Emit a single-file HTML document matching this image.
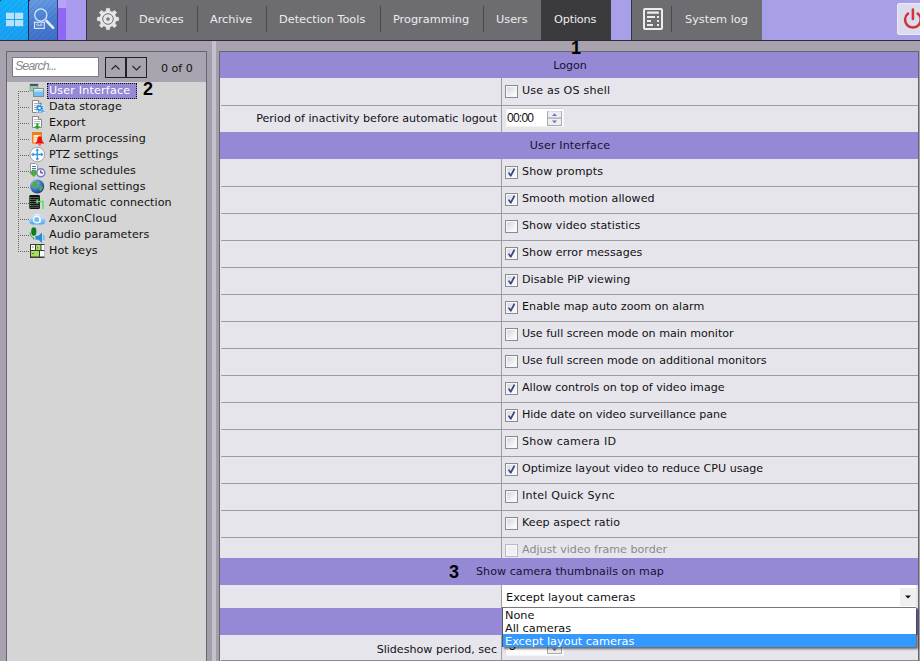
<!DOCTYPE html>
<html><head><meta charset="utf-8"><title>Options</title>
<style>
*{box-sizing:border-box;margin:0;padding:0}
html,body{width:920px;height:661px;overflow:hidden}
body{background:#a7a2ae;font-family:"DejaVu Sans","Liberation Sans",sans-serif;font-size:11px;color:#111;position:relative}
.abs{position:absolute}
svg{display:block}
#topbar{left:0;top:0;width:920px;height:41px;background:#a79fe7;border-bottom:1px solid #2b2b3b}
#tab1{left:0;top:0;width:28px;height:40px;background:repeating-linear-gradient(135deg,rgba(0,40,120,0) 0 3.2px,rgba(0,40,120,.13) 3.2px 4.24px),linear-gradient(170deg,#14b2fb,#1c9ff0)}
#tab2{left:29px;top:0;width:28px;height:40px;background:repeating-linear-gradient(135deg,rgba(0,20,100,0) 0 3.2px,rgba(0,20,100,.12) 3.2px 4.24px),linear-gradient(165deg,#6a9fe6,#4a80d2 50%,#3d6fc8)}
#tabsep{left:28px;top:0;width:1px;height:40px;background:#1d2a55}
#tabsep2{left:57px;top:0;width:1px;height:40px;background:#3a3f80}
#stripe1{left:58px;top:0;width:8px;height:40px;background:linear-gradient(#b8a2fc 0 8.5px,#9066f6 8.5px)}
#stripe2{left:66px;top:0;width:20px;height:40px;background:#a99cee}
.tb{top:0;height:40px;background:#6d6d71;border-left:1px solid #33334a}
.tsep{top:6px;width:1px;height:26px;background:#4a4a4c}
.tl{top:0;height:40px;line-height:40px;color:#ececec;font-size:11.3px;white-space:nowrap}
#opt{left:541px;top:0;width:70px;height:40px;background:#3b3b3d}
#power{left:897px;top:3px;width:26px;height:32px;background:#dddcee;border:1px solid #eceaf6;border-radius:2px}
.num{z-index:5;font-family:"Liberation Sans",sans-serif;font-weight:bold;font-size:18px;line-height:20px;color:#000}
/* left panel */
#lp{left:6px;top:51px;width:201px;height:620px;border:1px solid #68666c;background:#a9a4b0}
#tree{left:7px;top:82px;width:199px;height:580px;background:#d5d5d5}
#search{left:12px;top:57px;width:87px;height:20px;background:#fff;border:1px solid #7c7a82;color:#8a8a8a;font-family:"Liberation Sans",sans-serif;font-style:italic;font-size:12.5px;line-height:17px;padding-left:2px;letter-spacing:-1px}
.sbtn{top:57px;width:21px;height:21px;border:1px solid #222}
#cnt{left:161px;top:61px;font-size:11.1px;line-height:16px;color:#111}
#tvl{left:18px;top:91px;width:1px;height:161px;background:repeating-linear-gradient(#666 0 1px,transparent 1px 2px)}
.thl{left:18px;width:11px;height:1px;background:repeating-linear-gradient(90deg,#666 0 1px,transparent 1px 2px)}
.ico{left:29px;width:16px;height:16px}
#sel{left:47px;top:83px;width:90px;height:16px;background:#9589d6;border:1px dotted #111}
.ti{left:49px;height:16px;line-height:17px;font-size:11.1px;white-space:nowrap;color:#111}
#splitter{left:212px;top:41px;width:4px;height:631px;background:#c4c1cb}
.strip{top:52px;height:620px;background:#a39eab}
/* right panel */
#rp{left:219px;top:51px;width:700px;height:620px;border:1px solid #68666c;background:#e7e5ec;overflow:hidden}
.hd{left:220px;width:698px;height:27px;background:#9589d6;text-align:center;padding-left:2px;line-height:27px;font-size:11.1px;color:#16122e}
.rl{left:221px;width:697px;height:1px;background:#9d9c9f}
#vline{left:501px;top:78px;width:1px;height:583px;background:#9d9c9f}
.cb{left:505px;width:13px;height:13px;border:1px solid #8a8b8f;background:linear-gradient(135deg,#cdd0d4,#f6f6f8 70%,#fdfdfd);box-shadow:inset 0 0 0 1.3px #f7f7f9}
.cb.dis{border-color:#bcbcc0;background:#f0f0f2}
.ct{left:522px;height:16px;line-height:16px;font-size:11.1px;white-space:nowrap;color:#111}
.ct.dis{color:#8a8a8e}
.lbl{left:220px;width:277px;text-align:right;height:16px;line-height:16px;font-size:11.1px;white-space:nowrap;color:#111}
#time{left:506px;top:108px;width:58px;height:19px;background:#fff;border:1px solid #f4f4f8;border-top-color:#d0d0d6;font-family:"Liberation Sans",sans-serif;font-size:12px;line-height:18px;padding-left:0;color:#111;letter-spacing:-0.75px}
#spin{left:547px;top:111px;width:15px;height:15px}
#combo{left:502px;top:585px;width:414px;height:23px;background:#fff;font-size:11.3px;line-height:25px;padding-left:4px;color:#111;white-space:nowrap}
#cbtn{left:900px;top:588px;width:16px;height:18px;background:#f0f0f0}
#dd{left:502px;top:607px;width:414px;height:40px;background:#fff;border-left:1px solid #555;border-top:1px solid #777;box-shadow:2px 2px 2px rgba(0,0,0,.55)}
.di{height:13px;line-height:13px;font-size:11.3px;padding-left:2px;color:#111;white-space:nowrap}
.di span{display:inline-block;position:relative;top:1px;transform:scaleY(.9);transform-origin:0 80%}
.di.selx{background:#3399ff;color:#fff}
#time2{left:506px;top:637px;width:58px;height:19px;background:#fff;border:1px solid #f4f4f8;font-family:"Liberation Sans",sans-serif;font-size:12px;line-height:17px;padding-left:2px;color:#111}
#spin2{left:547px;top:639px;width:15px;height:15px}
</style></head><body>
<div id="topbar" class="abs"></div>
<div id="tab1" class="abs"></div><div id="tabsep" class="abs"></div>
<div id="tab2" class="abs"></div><div id="tabsep2" class="abs"></div>
<div id="stripe1" class="abs"></div><div id="stripe2" class="abs"></div>
<div class="abs tb" style="left:86px;width:455px"></div>
<div id="opt" class="abs"></div>
<div class="abs tb" style="left:631px;width:131px"></div>
<div class="abs tsep" style="left:126px"></div>
<div class="abs tsep" style="left:197px"></div>
<div class="abs tsep" style="left:266px"></div>
<div class="abs tsep" style="left:380px"></div>
<div class="abs tsep" style="left:483px"></div>
<div class="abs tsep" style="left:671px"></div>
<div class="abs tl" style="left:139px">Devices</div>
<div class="abs tl" style="left:210px">Archive</div>
<div class="abs tl" style="left:279px">Detection Tools</div>
<div class="abs tl" style="left:393px">Programming</div>
<div class="abs tl" style="left:496px">Users</div>
<div class="abs tl" style="left:554px;letter-spacing:-.2px">Options</div>
<div class="abs tl" style="left:685px">System log</div>

<svg class="abs" style="left:0;top:0" width="60" height="40" viewBox="0 0 60 40">
<path d="M0 0 H2 Q0 0 0 2 Z M29 0 H31 Q29 0 29 2 Z" fill="#111"/>
<g fill="#b6e2fd"><rect x="6" y="12.7" width="8" height="6.3"/><rect x="15" y="12.7" width="8.2" height="6.3"/><rect x="6" y="20" width="8" height="6.2"/><rect x="15" y="20" width="8.2" height="6.2"/></g>
<circle cx="40.8" cy="15" r="6.1" fill="none" stroke="#dde6f8" stroke-width="1.25"/>
<path d="M46.5 21 L53.2 27.8" stroke="#e3ebfb" stroke-width="2.6" stroke-linecap="round"/>
<rect x="34.5" y="22.2" width="9.8" height="6.2" fill="#4b7fd0" stroke="#e3ebfb" stroke-width="1.1"/>
<circle cx="37.5" cy="24.6" r="0.9" fill="none" stroke="#e3ebfb" stroke-width="0.7"/><circle cx="41.3" cy="24.6" r="0.9" fill="none" stroke="#e3ebfb" stroke-width="0.7"/><path d="M37.5 25.6 H41.3" stroke="#e3ebfb" stroke-width="0.6"/>
</svg>
<svg class="abs" style="left:87px;top:0" width="40" height="40" viewBox="0 0 40 40">
<path d="M19.07 11.24 L19.53 8.40 L22.47 8.40 L22.93 11.24 L25.13 12.15 L27.46 10.47 L29.53 12.54 L27.85 14.87 L28.76 17.07 L31.60 17.53 L31.60 20.47 L28.76 20.93 L27.85 23.13 L29.53 25.46 L27.46 27.53 L25.13 25.85 L22.93 26.76 L22.47 29.60 L19.53 29.60 L19.07 26.76 L16.87 25.85 L14.54 27.53 L12.47 25.46 L14.15 23.13 L13.24 20.93 L10.40 20.47 L10.40 17.53 L13.24 17.07 L14.15 14.87 L12.47 12.54 L14.54 10.47 L16.87 12.15 Z" fill="#e7e7e7" stroke="#e7e7e7" stroke-width="0.7" stroke-linejoin="round"/>
<circle cx="21" cy="19" r="5.3" fill="none" stroke="#6e6e72" stroke-width="1"/><circle cx="21" cy="19" r="1.8" fill="#77777b"/>
</svg>
<svg class="abs" style="left:640px;top:0" width="30" height="40" viewBox="0 0 30 40">
<rect x="4" y="9" width="18" height="20" rx="1" fill="none" stroke="#ececec" stroke-width="2"/>
<g fill="#ececec"><rect x="7" y="11.6" width="12" height="2.1" rx=".6"/><rect x="7" y="16" width="8" height="2"/><rect x="17" y="16" width="2" height="2"/><rect x="7" y="20" width="4" height="2"/><rect x="17" y="20" width="2" height="2"/><rect x="7" y="24" width="6" height="2"/><rect x="17" y="24" width="2" height="2"/></g>
</svg>
<div id="power" class="abs"><svg width="24" height="30" viewBox="0 0 24 30"><path d="M10.1 9.6 A7.8 7.8 0 1 0 19.7 9.6" fill="none" stroke="#cf3535" stroke-width="2.5" stroke-linecap="round"/><path d="M14.9 5.6 V15" stroke="#cf3535" stroke-width="2.5" stroke-linecap="round"/></svg></div>
<div class="abs num" style="left:571px;top:38px">1</div>

<div id="lp" class="abs"></div>
<div id="tree" class="abs"></div>
<div id="search" class="abs">Search...</div>
<div class="abs sbtn" style="left:105px"><svg width="19" height="19" viewBox="0 0 19 19"><path d="M5.5 11.5 L9.5 7.5 L13.5 11.5" fill="none" stroke="#222" stroke-width="1.1"/></svg></div>
<div class="abs sbtn" style="left:126px"><svg width="19" height="19" viewBox="0 0 19 19"><path d="M5.5 8 L9.5 12 L13.5 8" fill="none" stroke="#222" stroke-width="1.1"/></svg></div>
<div class="abs" id="cnt">0 of 0</div>
<div class="abs" id="tvl"></div>
<div class="abs thl" style="top:91px"></div>
<div class="abs ico" style="top:82px"><svg width="16" height="16" viewBox="0 0 16 16"><rect x="1" y="2" width="8" height="7" fill="#8fd095" stroke="#8d8d9a" stroke-width="0.6"/><rect x="1" y="2" width="8" height="2" fill="#4c4c86"/><rect x="4.5" y="6.5" width="10" height="8" fill="#6cc4f6" stroke="#8a8a8e"/><rect x="5" y="7" width="9" height="1.5" fill="#e8f4fc"/><rect x="5" y="9" width="9" height="1" fill="#a8dcfa"/></svg></div>
<div class="abs" id="sel"></div>
<div class="abs ti" style="top:82px;color:#fff;letter-spacing:.2px">User Interface</div>
<div class="abs thl" style="top:107px"></div>
<div class="abs ico" style="top:98px"><svg width="16" height="16" viewBox="0 0 16 16" style="overflow:visible"><path d="M3.5 2.5 H9.5 L12.5 5.5 V14.5 H3.5 Z" fill="#fff" stroke="#888" /><path d="M9.5 2.5 V5.5 H12.5" fill="#ddd" stroke="#888"/><path d="M5 5.5 H9 M5 7.5 H8 M5 9.5 H7 M5 11.5 H7" stroke="#aaa" stroke-width="1"/><rect x="7" y="6.5" width="8" height="8" fill="#cfe8fb" opacity=".8"/><circle cx="10.5" cy="10" r="3.1" fill="none" stroke="#2583dd" stroke-width="1.2" stroke-dasharray="1.2 1.23"/><circle cx="10.5" cy="10" r="2" fill="#e8f4ff" stroke="#2583dd" stroke-width="1.3"/><path d="M12.5 12 L15 14.5" stroke="#58a8ee" stroke-width="2.4" stroke-linecap="round"/><circle cx="15" cy="14.7" r="1" fill="#e8f4ff"/></svg></div>
<div class="abs ti" style="top:98px;letter-spacing:.05px">Data storage</div>
<div class="abs thl" style="top:123px"></div>
<div class="abs ico" style="top:114px"><svg width="16" height="16" viewBox="0 0 16 16" style="overflow:visible"><path d="M3.5 2.5 H9.5 L12.5 5.5 V13.5 H3.5 Z" fill="#fff" stroke="#888" /><path d="M9.5 2.5 V5.5 H12.5" fill="#ddd" stroke="#888"/><path d="M5 5.5 H9 M5 7.5 H11 M5 9.5 H11" stroke="#bbb" stroke-width="1"/><path d="M7.2 9.6 H9.4 V12.2 H11.4 L8.3 15.6 L5.2 12.2 H7.2 Z" fill="#1fae22"/></svg></div>
<div class="abs ti" style="top:114px;letter-spacing:.05px">Export</div>
<div class="abs thl" style="top:139px"></div>
<div class="abs ico" style="top:130px"><svg width="16" height="16" viewBox="0 0 16 16" style="overflow:visible"><rect x="3" y="2" width="10" height="11.5" fill="#f07c1c"/><rect x="4.5" y="5" width="7" height="7.5" fill="#fdeccf"/><path d="M4.5 7.5 H11.5 M4.5 10 H11.5" stroke="#f4b878" stroke-width="0.8"/><path d="M10.7 6.3 C12.6 6.3 13 8 13.1 9.8 C13.2 11.4 14 12.2 15 12.8 V13.6 H6.4 V12.8 C7.4 12.2 8.2 11.4 8.3 9.8 C8.4 8 8.8 6.3 10.7 6.3 Z" fill="#ee1111"/><rect x="9.5" y="14.4" width="2.4" height="1" fill="#ee1111"/></svg></div>
<div class="abs ti" style="top:130px;letter-spacing:.05px">Alarm processing</div>
<div class="abs thl" style="top:155px"></div>
<div class="abs ico" style="top:146px"><svg width="16" height="16" viewBox="0 0 16 16" style="overflow:visible"><circle cx="8.3" cy="8.5" r="7.3" fill="#fff" stroke="#999" stroke-width="0.9"/><path d="M8.3 3.5 V13.5 M3.3 8.5 H13.3" stroke="#3896e0" stroke-width="1.3"/><path d="M8.3 2.2 L10.3 4.8 H6.3 Z M8.3 14.8 L10.3 12.2 H6.3 Z M2 8.5 L4.6 6.5 V10.5 Z M14.6 8.5 L12 6.5 V10.5 Z" fill="#3896e0"/></svg></div>
<div class="abs ti" style="top:146px;letter-spacing:.05px">PTZ settings</div>
<div class="abs thl" style="top:171px"></div>
<div class="abs ico" style="top:162px"><svg width="16" height="16" viewBox="0 0 16 16" style="overflow:visible"><path d="M1.5 1.5 H6.5 L8.5 3.5 V9.5 H1.5 Z" fill="#fff" stroke="#999"/><path d="M3 4.5 H7 M3 6.5 H7" stroke="#4a78d0" stroke-width="1"/><path d="M3 8 H6.6 V10.6 H8.8 L4.8 14.6 L0.8 10.6 H3 Z" fill="#4fae3a" stroke="#2d8a22" stroke-width="0.5"/><circle cx="11.8" cy="10.8" r="4" fill="#f4f4ff" stroke="#7a7ac8" stroke-width="1.5"/><path d="M11.8 8.3 V11 H14" fill="none" stroke="#333" stroke-width="1"/></svg></div>
<div class="abs ti" style="top:162px;letter-spacing:.05px">Time schedules</div>
<div class="abs thl" style="top:187px"></div>
<div class="abs ico" style="top:178px"><svg width="16" height="16" viewBox="0 0 16 16" style="overflow:visible"><defs><radialGradient id="gg" cx="35%" cy="30%" r="75%"><stop offset="0" stop-color="#9ccaf4"/><stop offset=".55" stop-color="#3c78c8"/><stop offset="1" stop-color="#1c3c88"/></radialGradient></defs><circle cx="8.2" cy="8.5" r="7" fill="url(#gg)"/><path d="M4 4.5 C5.5 3 7.5 3 9 3.5 L8 5.5 L9.5 7 L7.5 8.5 L6.5 11.5 L5 9.5 L3 8.5 Z" fill="#4eaa48"/><path d="M10.5 8 L13 7.5 L14 10 L11.5 13.5 L10 11 Z" fill="#4eaa48"/></svg></div>
<div class="abs ti" style="top:178px;letter-spacing:.05px">Regional settings</div>
<div class="abs thl" style="top:203px"></div>
<div class="abs ico" style="top:194px"><svg width="16" height="16" viewBox="0 0 16 16" style="overflow:visible"><rect x="0.3" y="1" width="10.6" height="14" rx="1.2" fill="#111"/><path d="M2 3.5 H10 M2 5.5 H10 M2 7.5 H10 M2 9.5 H10 M2 11.5 H10 M2 13.3 H10" stroke="#6a6a6a" stroke-width="0.8"/><path d="M1.5 3 V13.5" stroke="#2fbf3f" stroke-width="1" stroke-dasharray="1 1"/><path d="M6 7.5 L9 5.2 V6.8 H14.7 V15 H13.3 V8.2 H9 V9.8 Z" fill="#4fe25f"/></svg></div>
<div class="abs ti" style="top:194px;letter-spacing:.05px">Automatic connection</div>
<div class="abs thl" style="top:219px"></div>
<div class="abs ico" style="top:210px"><svg width="16" height="16" viewBox="0 0 16 16" style="overflow:visible"><defs><linearGradient id="cg" x1="0" y1="0" x2="0" y2="1"><stop offset="0" stop-color="#e4f3ff"/><stop offset="1" stop-color="#4aa6f2"/></linearGradient></defs><path d="M3.5 14.5 C1 14.5 -0.2 12.4 0.5 10.6 C1 9.2 2.2 8.6 3.2 8.6 C3.4 5.8 5.4 3.8 8 3.8 C10.6 3.8 12.4 5.6 12.8 7.8 C15 7.8 16.4 9.4 16.4 11.2 C16.4 13 15 14.5 13 14.5 Z" fill="url(#cg)"/><circle cx="7.8" cy="9.6" r="3.3" fill="#78bdf5" stroke="#fff" stroke-width="1.3"/><path d="M11 8 V13" stroke="#fff" stroke-width="1.2"/></svg></div>
<div class="abs ti" style="top:210px;letter-spacing:.2px">AxxonCloud</div>
<div class="abs thl" style="top:235px"></div>
<div class="abs ico" style="top:226px"><svg width="16" height="16" viewBox="0 0 16 16" style="overflow:visible"><ellipse cx="4.8" cy="5.5" rx="2.6" ry="4.2" fill="#0b7d22"/><path d="M1.2 6.5 C1.2 11.5 4.8 11.8 4.8 11.8 V13.5" fill="none" stroke="#2aa23a" stroke-width="1"/><path d="M6.5 9.8 H9.5 L13 6.6 V17 L9.5 13.8 H6.5 Z" fill="#1f8fd2"/><path d="M14 9.5 C15.5 10.5 15.5 13 14 14" fill="none" stroke="#58b4ee" stroke-width="1.2"/></svg></div>
<div class="abs ti" style="top:226px;letter-spacing:.05px">Audio parameters</div>
<div class="abs thl" style="top:251px"></div>
<div class="abs ico" style="top:242px"><svg width="16" height="16" viewBox="0 0 16 16" style="overflow:visible"><rect x="1" y="2" width="14.5" height="14" fill="#3a3a3a"/><rect x="2" y="3" width="4" height="5" fill="#fafafa"/><rect x="7" y="3" width="4.5" height="5" fill="#a4e262"/><rect x="12.5" y="3" width="3" height="5" fill="#fafafa"/><rect x="2" y="9" width="8" height="5.5" fill="#a4e262"/><rect x="11" y="9" width="4.5" height="5.5" fill="#fafafa"/><path d="M3 5 H4.5 M8.5 5 V6.5 M3 11.5 H5" stroke="#555" stroke-width="0.8"/></svg></div>
<div class="abs ti" style="top:242px;letter-spacing:.05px">Hot keys</div>
<div class="abs num" style="left:143px;top:79px">2</div>
<div class="abs strip" style="left:207px;width:5px"></div><div class="abs strip" style="left:216px;width:3px"></div>
<div id="splitter" class="abs"></div>
<div id="rp" class="abs"></div>
<div id="vline" class="abs"></div>
<div class="abs hd" style="top:52px;height:26px">Logon</div>
<div class="abs cb" style="top:85px"></div>
<div class="abs ct" style="top:83px;letter-spacing:0.18px">Use as OS shell</div>
<div class="abs rl" style="top:105px"></div>
<div class="abs lbl" style="top:111px">Period of inactivity before automatic logout</div>
<div class="abs" id="time">00:00</div>
<div class="abs" id="spin"><svg width="15" height="15" viewBox="0 0 15 15"><rect x="0.5" y="0.5" width="14" height="14" fill="#eeeef2" stroke="#a9a9ae"/><rect x="1" y="0" width="13" height="1" fill="#dcdce2"/><rect x="1" y="6.3" width="13" height="1.7" fill="#b9b9be"/><path d="M7.5 2.2 L10 5 L5 5 Z" fill="#6573c2"/><path d="M7.5 12.2 L10 9.4 L5 9.4 Z" fill="#6573c2"/></svg></div>
<div class="abs hd" style="top:132px;letter-spacing:.15px">User Interface</div>
<div class="abs cb" style="top:166px"><svg width="11" height="11" viewBox="0 0 11 11"><path d="M1.9 6 L3.2 5.3 L4.7 7.1 L7.7 1.3 L9.3 1.9 L5.4 9.5 L4.2 9.5 Z" fill="#3a4786"/></svg></div>
<div class="abs ct" style="top:164px;letter-spacing:0.13px">Show prompts</div>
<div class="abs rl" style="top:186px"></div>
<div class="abs cb" style="top:193px"><svg width="11" height="11" viewBox="0 0 11 11"><path d="M1.9 6 L3.2 5.3 L4.7 7.1 L7.7 1.3 L9.3 1.9 L5.4 9.5 L4.2 9.5 Z" fill="#3a4786"/></svg></div>
<div class="abs ct" style="top:191px;letter-spacing:0.06px">Smooth motion allowed</div>
<div class="abs rl" style="top:213px"></div>
<div class="abs cb" style="top:220px"></div>
<div class="abs ct" style="top:218px;letter-spacing:0.08px">Show video statistics</div>
<div class="abs rl" style="top:240px"></div>
<div class="abs cb" style="top:247px"><svg width="11" height="11" viewBox="0 0 11 11"><path d="M1.9 6 L3.2 5.3 L4.7 7.1 L7.7 1.3 L9.3 1.9 L5.4 9.5 L4.2 9.5 Z" fill="#3a4786"/></svg></div>
<div class="abs ct" style="top:245px;letter-spacing:0.05px">Show error messages</div>
<div class="abs rl" style="top:267px"></div>
<div class="abs cb" style="top:274px"><svg width="11" height="11" viewBox="0 0 11 11"><path d="M1.9 6 L3.2 5.3 L4.7 7.1 L7.7 1.3 L9.3 1.9 L5.4 9.5 L4.2 9.5 Z" fill="#3a4786"/></svg></div>
<div class="abs ct" style="top:272px;letter-spacing:0.07px">Disable PiP viewing</div>
<div class="abs rl" style="top:294px"></div>
<div class="abs cb" style="top:301px"><svg width="11" height="11" viewBox="0 0 11 11"><path d="M1.9 6 L3.2 5.3 L4.7 7.1 L7.7 1.3 L9.3 1.9 L5.4 9.5 L4.2 9.5 Z" fill="#3a4786"/></svg></div>
<div class="abs ct" style="top:299px;letter-spacing:0.05px">Enable map auto zoom on alarm</div>
<div class="abs rl" style="top:321px"></div>
<div class="abs cb" style="top:328px"></div>
<div class="abs ct" style="top:326px;letter-spacing:-0.02px">Use full screen mode on main monitor</div>
<div class="abs rl" style="top:348px"></div>
<div class="abs cb" style="top:355px"></div>
<div class="abs ct" style="top:353px;letter-spacing:-0.02px">Use full screen mode on additional monitors</div>
<div class="abs rl" style="top:375px"></div>
<div class="abs cb" style="top:382px"><svg width="11" height="11" viewBox="0 0 11 11"><path d="M1.9 6 L3.2 5.3 L4.7 7.1 L7.7 1.3 L9.3 1.9 L5.4 9.5 L4.2 9.5 Z" fill="#3a4786"/></svg></div>
<div class="abs ct" style="top:380px">Allow controls on top of video image</div>
<div class="abs rl" style="top:402px"></div>
<div class="abs cb" style="top:409px"><svg width="11" height="11" viewBox="0 0 11 11"><path d="M1.9 6 L3.2 5.3 L4.7 7.1 L7.7 1.3 L9.3 1.9 L5.4 9.5 L4.2 9.5 Z" fill="#3a4786"/></svg></div>
<div class="abs ct" style="top:407px;letter-spacing:-0.05px">Hide date on video surveillance pane</div>
<div class="abs rl" style="top:429px"></div>
<div class="abs cb" style="top:436px"></div>
<div class="abs ct" style="top:434px;letter-spacing:0.25px">Show camera ID</div>
<div class="abs rl" style="top:456px"></div>
<div class="abs cb" style="top:463px"><svg width="11" height="11" viewBox="0 0 11 11"><path d="M1.9 6 L3.2 5.3 L4.7 7.1 L7.7 1.3 L9.3 1.9 L5.4 9.5 L4.2 9.5 Z" fill="#3a4786"/></svg></div>
<div class="abs ct" style="top:461px">Optimize layout video to reduce CPU usage</div>
<div class="abs rl" style="top:483px"></div>
<div class="abs cb" style="top:490px"></div>
<div class="abs ct" style="top:488px;letter-spacing:0.20px">Intel Quick Sync</div>
<div class="abs rl" style="top:510px"></div>
<div class="abs cb" style="top:517px"></div>
<div class="abs ct" style="top:515px;letter-spacing:0.07px">Keep aspect ratio</div>
<div class="abs rl" style="top:537px"></div>
<div class="abs cb dis" style="top:544px"></div>
<div class="abs ct dis" style="top:542px">Adjust video frame border</div>
<div class="abs hd" style="top:558px;text-align:left;padding-left:256px;line-height:28px;letter-spacing:.05px">Show camera thumbnails on map</div>
<div class="abs num" style="left:449px;top:562px">3</div>
<div class="abs" id="combo">Except layout cameras</div>
<div class="abs" id="cbtn"><svg width="16" height="18" viewBox="0 0 16 18"><path d="M5 7.5 L11 7.5 L8 10.5 Z" fill="#111"/></svg></div>
<div class="abs hd" style="top:608px"></div>
<div class="abs lbl" style="top:642px">Slideshow period, sec</div>
<div class="abs" id="time2">5</div>
<div class="abs" id="spin2"><svg width="15" height="15" viewBox="0 0 15 15"><rect x="0.5" y="0.5" width="14" height="14" fill="#eeeef2" stroke="#a9a9ae"/><rect x="1" y="0" width="13" height="1" fill="#dcdce2"/><rect x="1" y="6.3" width="13" height="1.7" fill="#b9b9be"/><path d="M7.5 2.2 L10 5 L5 5 Z" fill="#6573c2"/><path d="M7.5 12.2 L10 9.4 L5 9.4 Z" fill="#6573c2"/></svg></div>
<div class="abs rl" style="top:660px;background:#8c8b8f"></div>
<div class="abs" id="dd">
<div class="di"><span>None</span></div><div class="di"><span>All cameras</span></div><div class="di selx"><span>Except layout cameras</span></div>
</div>

</body></html>
